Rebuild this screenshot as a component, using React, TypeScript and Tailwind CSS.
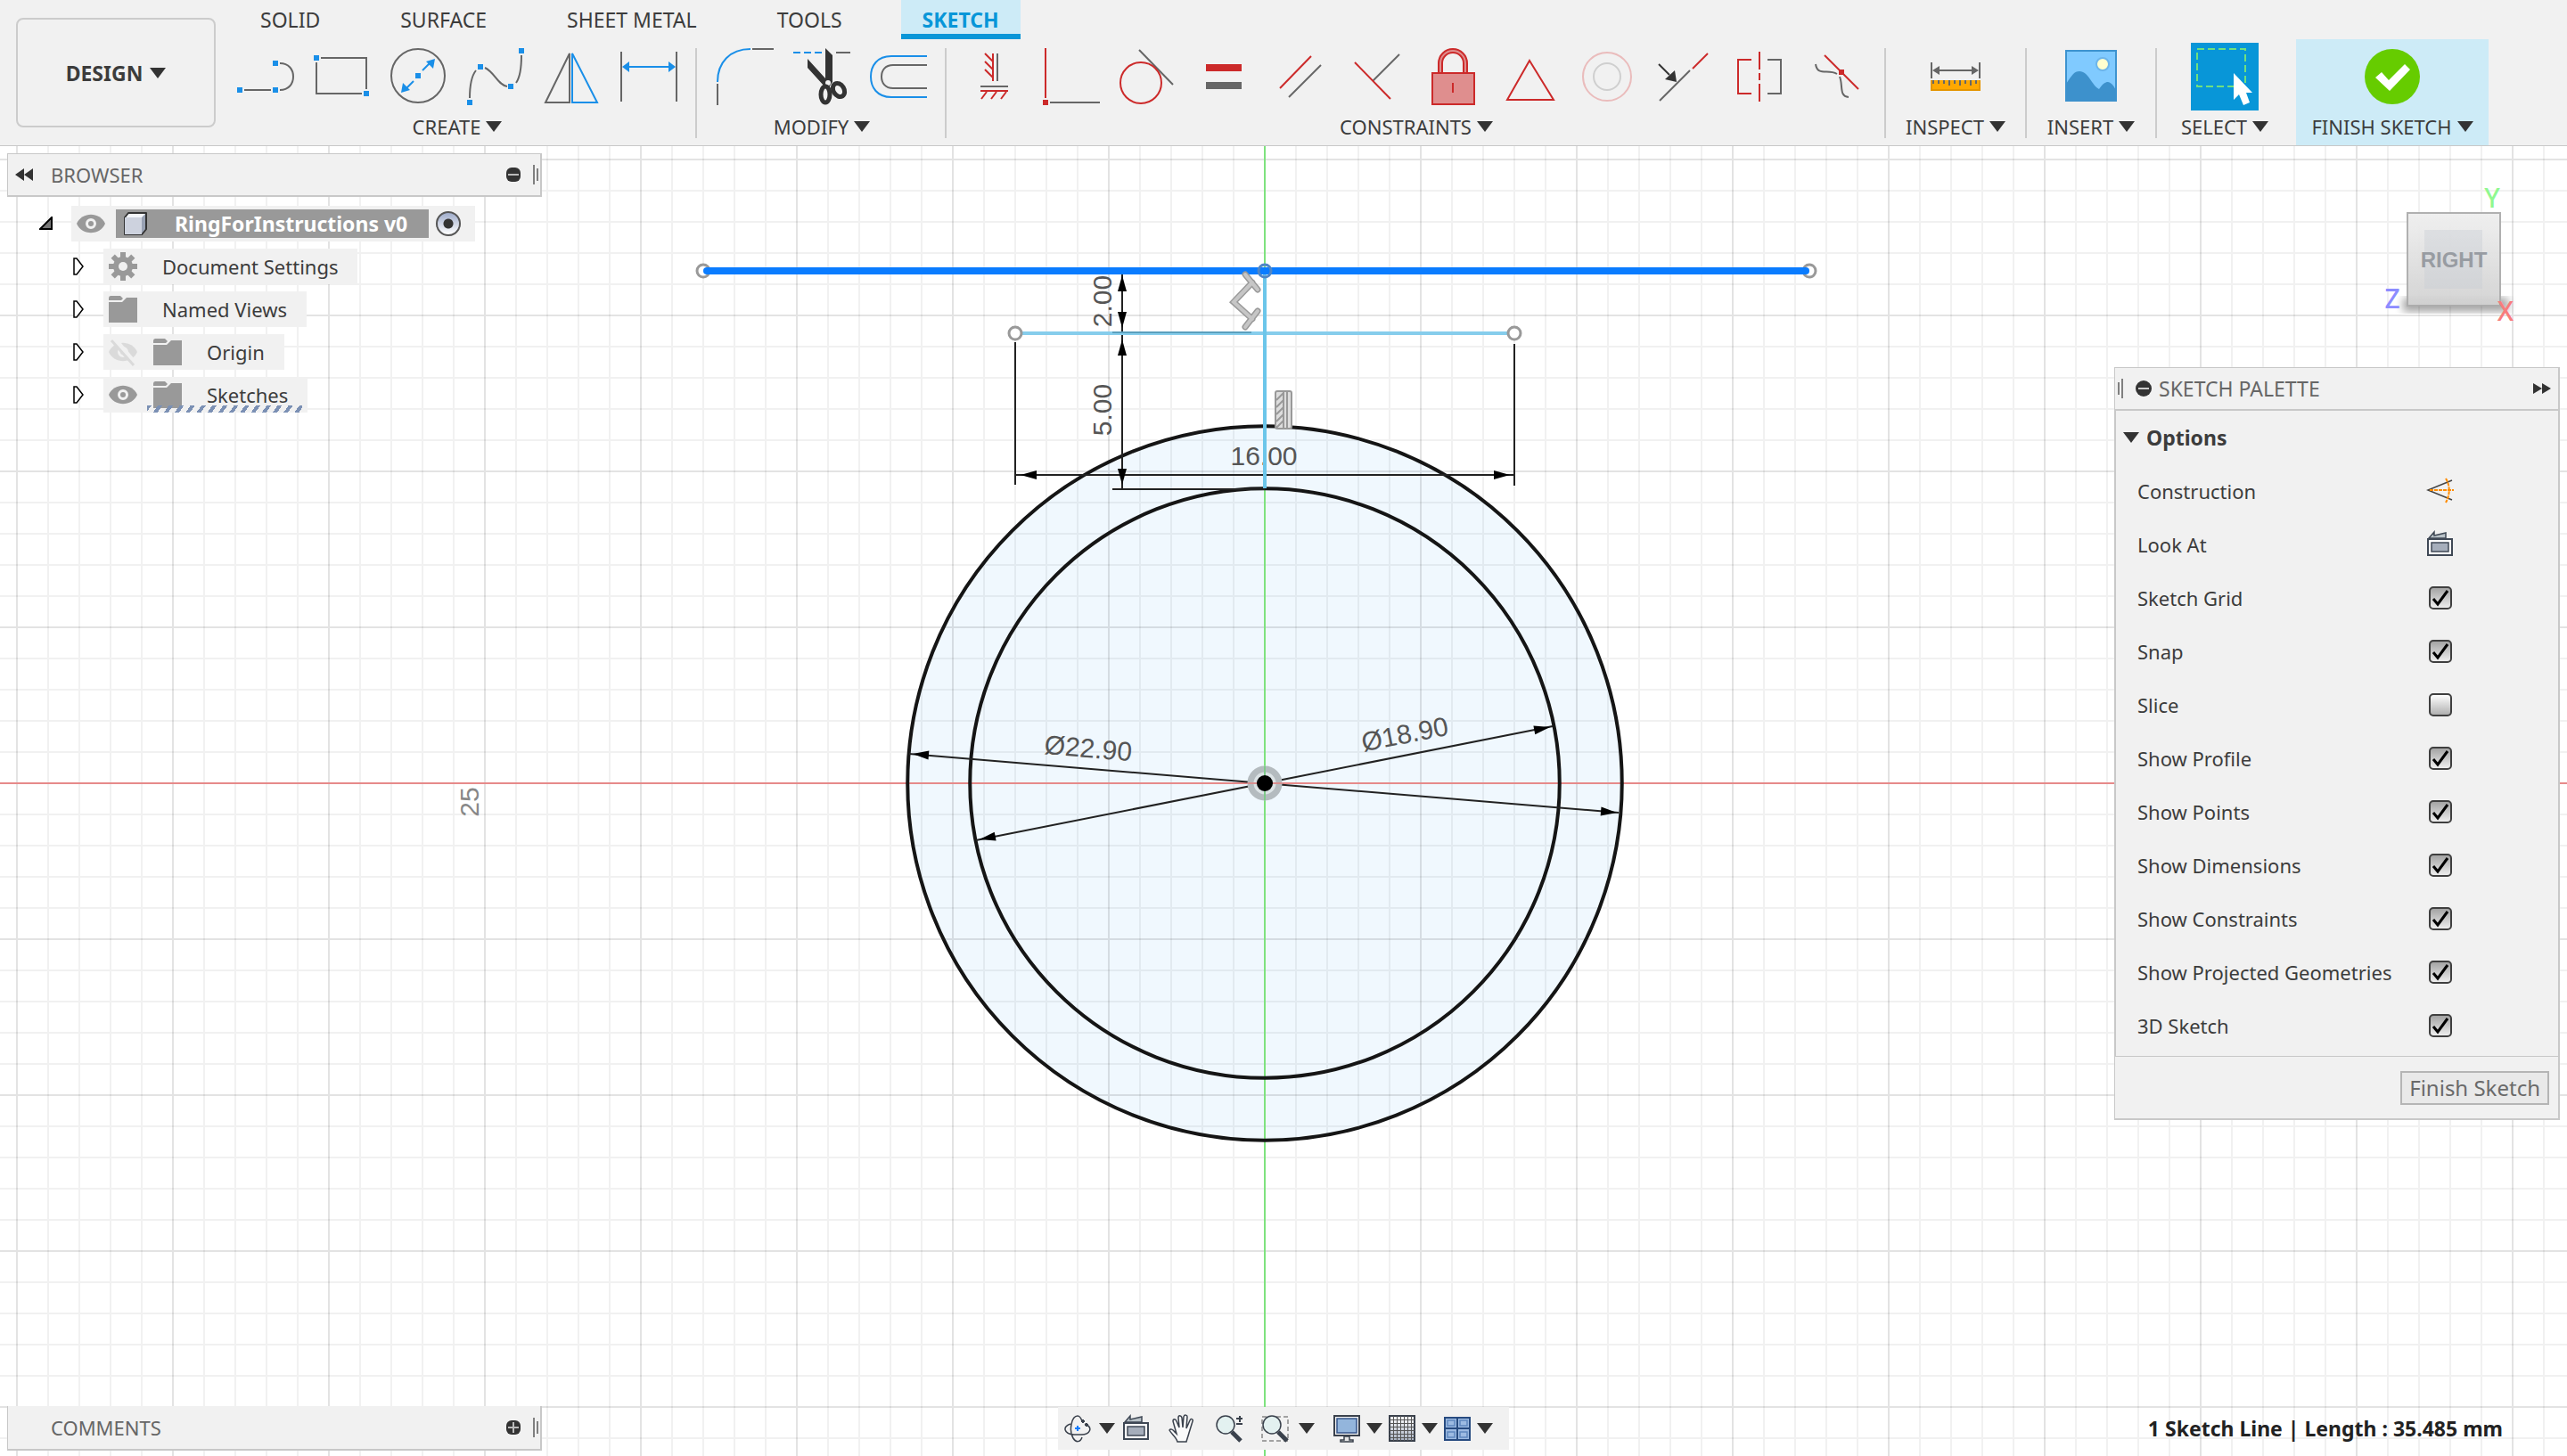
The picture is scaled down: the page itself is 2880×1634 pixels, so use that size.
import type { ReactNode } from 'react';
import clsx from 'clsx';

const GRAY = '#666666';
const BLUE = '#1a8fe8';
const RED = '#cc2a2a';
const DARK = '#333333';

// canvas pixels per millimetre
const MM = 35;

function Caret() {
  return (
    <svg className="h-3 w-[18px] shrink-0" viewBox="0 0 18 12" fill={DARK} aria-hidden="true">
      <path d="M0 0h18L9 12z" />
    </svg>
  );
}

function Dot({ x, y, fill = BLUE }: { x: number; y: number; fill?: string }) {
  return <rect x={x - 3} y={y - 3} width="6" height="6" fill={fill} />;
}

function ToolIcon({ children }: { children: ReactNode }) {
  return (
    <svg className="size-16" viewBox="0 0 64 64" fill="none" stroke={GRAY} strokeWidth="2" aria-hidden="true">
      {children}
    </svg>
  );
}

interface Tool {
  name: string;
  icon: ReactNode;
}

const createTools: Tool[] = [
  {
    name: 'Line',
    icon: (
      <ToolIcon>
        <path d="M8 47h30M48 17c10 0 15 7 15 15s-5 15-15 15" />
        <g stroke="none">
          <Dot x={3} y={47} />
          <Dot x={43} y={47} />
          <Dot x={43} y={17} />
        </g>
      </ToolIcon>
    ),
  },
  {
    name: 'Rectangle',
    icon: (
      <ToolIcon>
        <path d="M8 11h51v35M3 16v35h51" />
        <g stroke="none">
          <Dot x={3} y={11} />
          <Dot x={59} y={51} />
        </g>
      </ToolIcon>
    ),
  },
  {
    name: 'Circle',
    icon: (
      <ToolIcon>
        <circle cx="31" cy="31" r="30" />
        <path d="M36 25l8-8M26 37l-8 8" stroke={BLUE} />
        <g stroke="none" fill={BLUE}>
          <path d="M50 12l-2 11-8-8zM12 50l2-11 8 8z" />
          <Dot x={31} y={31} />
        </g>
      </ToolIcon>
    ),
  },
  {
    name: 'Spline',
    icon: (
      <ToolIcon>
        <path d="M3 56c0-16 3-26 7-31M20 22c11 5 14 19 25 21M55 39c5-7 6-18 6-31" />
        <g stroke="none">
          <Dot x={3} y={61} />
          <Dot x={15} y={21} />
          <Dot x={49} y={43} />
          <Dot x={61} y={3} />
        </g>
      </ToolIcon>
    ),
  },
  {
    name: 'Mirror',
    icon: (
      <ToolIcon>
        <path d="M29 6v55H2z" />
        <path d="M32 6v55h28z" stroke={BLUE} />
      </ToolIcon>
    ),
  },
  {
    name: 'Sketch Dimension',
    icon: (
      <ToolIcon>
        <path d="M1 4v56M63 4v56" />
        <path d="M8 21h48" stroke={BLUE} />
        <path d="M2 21l8-6v12zM62 21l-8-6v12z" fill={BLUE} stroke="none" />
      </ToolIcon>
    ),
  },
];

const modifyTools: Tool[] = [
  {
    name: 'Fillet',
    icon: (
      <ToolIcon>
        <path d="M1 38C1 16 15 1 38 1" stroke={BLUE} />
        <path d="M40 1h24M1 40v24" />
      </ToolIcon>
    ),
  },
  {
    name: 'Trim',
    icon: (
      <ToolIcon>
        <path d="M0 5h32" stroke={BLUE} strokeDasharray="8 4" />
        <path d="M48 5h16" />
        <path d="M36 0l8 8v30l-4 6-5-1-19-21V12l20 22z" fill={DARK} stroke="none" />
        <circle cx="39" cy="39" r="3" fill="#f1f1f1" stroke="none" />
        <g stroke={DARK} strokeWidth="5">
          <ellipse cx="36" cy="52" rx="5" ry="9" />
          <ellipse cx="51" cy="47" rx="6" ry="8" transform="rotate(-32 51 47)" />
        </g>
      </ToolIcon>
    ),
  },
  {
    name: 'Offset',
    icon: (
      <ToolIcon>
        <path d="M64 9H24C8 9 1 20 1 32s7 23 23 23h40" stroke={BLUE} />
        <path d="M64 19H26c-9 0-13 6-13 13s4 13 13 13h38" />
      </ToolIcon>
    ),
  },
];

const constraintTools: Tool[] = [
  {
    name: 'Horizontal/Vertical',
    icon: (
      <ToolIcon>
        <path d="M30 6v31M21 6l9 9M21 15l9 9M21 24l9 9M16 48h31M23 49l-6 8M34 49l-6 8M45 49l-6 8" stroke={RED} />
        <path d="M35 6v31M16 43h31" />
      </ToolIcon>
    ),
  },
  {
    name: 'Coincident',
    icon: (
      <ToolIcon>
        <path d="M3 0v56" stroke={RED} />
        <path d="M8 61h56" />
        <g stroke="none">
          <Dot x={3} y={61} fill={RED} />
        </g>
      </ToolIcon>
    ),
  },
  {
    name: 'Tangent',
    icon: (
      <ToolIcon>
        <path d="M22 2l38 39" />
        <circle cx="24" cy="39" r="23" stroke={RED} />
      </ToolIcon>
    ),
  },
  {
    name: 'Equal',
    icon: (
      <ToolIcon>
        <path d="M11 22h40" stroke={RED} strokeWidth="8" />
        <path d="M11 42h40" strokeWidth="8" />
      </ToolIcon>
    ),
  },
  {
    name: 'Parallel',
    icon: (
      <ToolIcon>
        <path d="M8 45L43 9" stroke={RED} />
        <path d="M18 55l36-36" />
      </ToolIcon>
    ),
  },
  {
    name: 'Perpendicular',
    icon: (
      <ToolIcon>
        <path d="M26 37L56 7" />
        <path d="M6 16l40 41" stroke={RED} />
      </ToolIcon>
    ),
  },
  {
    name: 'Fix/Unfix',
    icon: (
      <ToolIcon>
        <path d="M16 28V17a14 14 0 0 1 28 0v11" stroke={RED} strokeWidth="6" />
        <path d="M16 28V17a14 14 0 0 1 28 0v11" stroke="#df8e8e" />
        <rect x="7" y="28" width="47" height="35" fill="#df8e8e" stroke={RED} />
        <path d="M30 39v11" stroke={RED} />
      </ToolIcon>
    ),
  },
  {
    name: 'Polygon',
    icon: (
      <ToolIcon>
        <path d="M30 14l27 44H5z" stroke={RED} />
      </ToolIcon>
    ),
  },
  {
    name: 'Concentric',
    icon: (
      <ToolIcon>
        <circle cx="31" cy="32" r="27" stroke="#eabcbc" />
        <circle cx="31" cy="32" r="15" stroke="#cfcfcf" />
      </ToolIcon>
    ),
  },
  {
    name: 'Midpoint',
    icon: (
      <ToolIcon>
        <path d="M4 59l34-34" />
        <path d="M41 23L58 6" stroke={RED} />
        <path d="M3 18l12 12" stroke={DARK} />
        <path d="M23 38l-2-13-11 10z" fill={DARK} stroke="none" />
      </ToolIcon>
    ),
  },
  {
    name: 'Symmetry',
    icon: (
      <ToolIcon>
        <path d="M21 13H6v38h15M30 4v20M30 28v8M30 40v20" stroke={RED} />
        <path d="M39 13h15v38H39" />
      </ToolIcon>
    ),
  },
  {
    name: 'Curvature',
    icon: (
      <ToolIcon>
        <path d="M7 18c2 14 14 5 24 11M34 32c4 10-1 22 10 23" />
        <path d="M17 8l38 38" stroke={RED} />
        <g stroke="none">
          <Dot x={36} y={27} fill={RED} />
        </g>
      </ToolIcon>
    ),
  },
];

const inspectTools: Tool[] = [
  {
    name: 'Measure',
    icon: (
      <ToolIcon>
        <path d="M5 16v18M59 16v18M12 25h40" />
        <path d="M6 25l8-5v10zM58 25l-8-5v10z" fill={GRAY} stroke="none" />
        <rect x="4" y="36" width="56" height="12" fill="#e39500" stroke="none" />
        <rect x="6" y="36" width="52" height="10" fill="#ffa800" stroke="none" />
        <path d="M7 36v4M13 36v4M19 36v4M25 36v6M31 36v4M37 36v6M43 36v4M49 36v6M55 36v4" />
      </ToolIcon>
    ),
  },
];

const insertTools: Tool[] = [
  {
    name: 'Insert Image',
    icon: (
      <ToolIcon>
        <rect x="4" y="3" width="56" height="56" fill="#80caff" stroke="#3d93d0" />
        <circle cx="45" cy="18" r="7" fill="#ffffcf" stroke="#6db5ea" />
        <path d="M4 40c7-10 9-14 15-14 10 0 14 16 22 20 4-6 7-8 10-8 5 1 7 6 9 9v13H4z" fill="#3d91cc" stroke="none" />
      </ToolIcon>
    ),
  },
];

const selectTools: Tool[] = [
  {
    name: 'Select',
    icon: (
      <svg className="size-19 shrink-0 bg-[#0896d8]" viewBox="0 0 76 76" fill="none" aria-hidden="true">
        <rect x="7" y="7" width="54" height="42" stroke="#6fe07f" strokeWidth="2" strokeDasharray="8 4" />
        <path d="M48 34l21 22h-7l4 11-7 3-5-12-6 6z" fill="#ffffff" />
      </svg>
    ),
  },
];

const finishTools: Tool[] = [
  {
    name: 'Finish Sketch',
    icon: (
      <ToolIcon>
        <circle cx="32" cy="32" r="31" fill="#66cc00" stroke="none" />
        <path d="M13 33l7-6 8 9 18-18 6 6-23 24z" fill="#ffffff" stroke="none" />
      </ToolIcon>
    ),
  },
];

function ToolGroup({ label, tools, className }: { label: string; tools: Tool[]; className?: string }) {
  return (
    <div className={clsx('flex flex-col items-center gap-3 pt-[10px]', className)}>
      <div className="flex h-16 items-center gap-[22px]">
        {tools.map((tool) => (
          <button key={tool.name} type="button" aria-label={tool.name} className="flex w-16 justify-center">
            {tool.icon}
          </button>
        ))}
      </div>
      <button type="button" className="flex items-center gap-[6px] leading-6 whitespace-nowrap">
        {label}
        <Caret />
      </button>
    </div>
  );
}

function Separator() {
  return <div className="mt-[10px] mb-2 w-[2px] shrink-0 bg-[#cccccc]" />;
}

const tabs = ['SOLID', 'SURFACE', 'SHEET METAL', 'TOOLS', 'SKETCH'];

function Toolbar() {
  return (
    <header className="flex h-41 shrink-0 border-b border-[#c8c8c8] bg-[#f1f1f1]">
      <button
        type="button"
        className="my-5 ml-[18px] flex w-56 shrink-0 items-center justify-center gap-2 rounded-lg border-2 border-[#cccccc] text-[23px] font-bold"
      >
        DESIGN
        <Caret />
      </button>
      <div className="flex flex-col">
        <nav className="ml-[26px] flex h-11 gap-[42px] text-[23px]">
          {tabs.map((tab) => (
            <button
              key={tab}
              type="button"
              className={clsx(
                'h-11 px-6 leading-7',
                tab === 'SKETCH' && 'border-b-6 border-[#0896d8] bg-[#cdebf7] pt-[6px] font-bold text-[#0896d8]',
              )}
            >
              {tab}
            </button>
          ))}
        </nav>
        <div className="flex flex-1">
          <ToolGroup label="CREATE" tools={createTools} className="pr-5 pl-6" />
          <Separator />
          <ToolGroup label="MODIFY" tools={modifyTools} className="pr-5 pl-[22px]" />
          <Separator />
          <ToolGroup label="CONSTRAINTS" tools={constraintTools} className="pr-5 pl-[22px]" />
          <Separator />
          <ToolGroup label="INSPECT" tools={inspectTools} className="w-39" />
          <Separator />
          <ToolGroup label="INSERT" tools={insertTools} className="w-36" />
          <Separator />
          <ToolGroup label="SELECT" tools={selectTools} className="w-39 pr-1" />
          <ToolGroup label="FINISH SKETCH" tools={finishTools} className="w-54 bg-[#cdebf7]" />
        </div>
      </div>
    </header>
  );
}

/* ---------- sketch canvas ---------- */

function gridLines(from: number, to: number) {
  const lines: number[] = [];
  for (let i = from; i <= to; i++) lines.push(i);
  return lines;
}

function Grid() {
  const xs = gridLines(-41, 42);
  const ys = gridLines(-21, 22);
  const path = (major: boolean) =>
    [
      ...xs.filter((i) => (i % 5 === 0) === major).map((i) => `M${i * MM} -715V755`),
      ...ys.filter((i) => (i % 5 === 0) === major).map((i) => `M-1419 ${i * MM}H1461`),
    ].join('');
  return (
    <g strokeWidth="2" fill="none" stroke="#000000">
      <path d={path(false)} opacity="0.055" />
      <path d={path(true)} opacity="0.11" />
    </g>
  );
}

function Arrow({ x, y, angle }: { x: number; y: number; angle: number }) {
  return <path d="M0 0l-18 -5v10z" fill="#000000" stroke="none" transform={`translate(${x} ${y}) rotate(${angle})`} />;
}

function Dim({ x, y, angle = 0, children }: { x: number; y: number; angle?: number; children: string }) {
  return (
    <text textAnchor="middle" transform={`translate(${x} ${y}) rotate(${angle})`}>
      {children}
    </text>
  );
}

function SketchCanvas() {
  return (
    <svg
      className="absolute inset-0 h-full w-full font-['Liberation_Sans',sans-serif] text-[30px]"
      viewBox="-1419 -715 2880 1470"
      preserveAspectRatio="xMidYMid slice"
      role="img"
      aria-label="Sketch"
    >
      <circle r={11.45 * MM} fill="#f0f8fe" />
      <Grid />
      <path d="M-1419 0H1461" stroke="#e68a8a" strokeWidth="2" />
      <path d="M0 -715V755" stroke="#7fe27f" strokeWidth="2" />

      <g fill="none" stroke="#151515" strokeWidth="4">
        <circle r={11.45 * MM} />
        <circle r={9.45 * MM} />
      </g>

      {/* dimension lines */}
      <g stroke="#222222" strokeWidth="2">
        <path d="M-160 -571V-331M-171 -330H0M-280 -346H280M-280 -495V-335M280 -493V-334" fill="none" />
        <path d="M-399 -33L397 33M-324 64L323 -64" fill="none" />
        <Arrow x={-160} y={-570} angle={-90} />
        <Arrow x={-160} y={-511} angle={90} />
        <Arrow x={-160} y={-498} angle={-90} />
        <Arrow x={-160} y={-335} angle={90} />
        <Arrow x={-274} y={-346} angle={180} />
        <Arrow x={275} y={-346} angle={0} />
        <Arrow x={-395} y={-33} angle={185} />
        <Arrow x={395} y={33} angle={5} />
        <Arrow x={-320} y={63} angle={169} />
        <Arrow x={320} y={-63} angle={-11} />
      </g>
      <g fill="#555555">
        <Dim x={-172} y={-541} angle={-90}>2.00</Dim>
        <Dim x={-172} y={-419} angle={-90}>5.00</Dim>
        <Dim x={-1} y={-357}>16.00</Dim>
        <Dim x={-199} y={-29} angle={5}>Ø22.90</Dim>
        <Dim x={159} y={-45} angle={-11}>Ø18.90</Dim>
      </g>
      <g fill="#888888">
        <Dim x={-882} y={21} angle={-90}>25</Dim>
      </g>

      {/* sketch lines and their end points */}
      <path d="M-280 -505H280" stroke="#86cdec" strokeWidth="4" />
      <path d="M0 -575V-331" stroke="#6cc6ea" strokeWidth="4" />
      <path d="M-171 -506H-15" stroke="#5b9fbd" strokeWidth="2" />
      <g fill="#ffffff" stroke="#999999" strokeWidth="3">
        <circle cx="-630" cy="-575" r="7" />
        <circle cx="611" cy="-575" r="7" />
        <circle cx="-280" cy="-505" r="7" />
        <circle cx="280" cy="-505" r="7" />
      </g>
      <path d="M-626 -575H607" stroke="#0a7cff" strokeWidth="8" strokeLinecap="round" />
      <circle cy="-575" r="7" fill="none" stroke="#4f86c6" strokeWidth="3" />

      {/* perpendicular glyph */}
      <g fill="none" strokeLinecap="round">
        <path d="M-14 -562L-35 -540L-14 -521M-22 -571L-8 -554M-8 -530L-22 -512" stroke="#9a9a9a" strokeWidth="7" />
        <path d="M-14 -562L-35 -540L-14 -521M-22 -571L-8 -554M-8 -530L-22 -512" stroke="#c6c6c6" strokeWidth="4" />
      </g>
      {/* vertical glyph */}
      <g fill="none" stroke="#999999" strokeWidth="2">
        <rect x="12" y="-440" width="18" height="42" rx="2" fill="#dddddd" />
        <path d="M21 -440v42M25 -440v42M13 -430l8 -8M13 -422l8 -8M13 -414l8 -8M13 -406l8 -8M13 -399l8 -8" />
      </g>

      <circle r="16" fill="#dce3e6" stroke="#b4bbbf" strokeWidth="7" />
      <path d="M-19 0H19" stroke="#d98f8f" strokeWidth="2" />
      <path d="M0 -19V19" stroke="#7fc98a" strokeWidth="2" />
      <circle r="9" fill="#000000" />
    </svg>
  );
}

/* ---------- browser ---------- */

function Eye({ off }: { off?: boolean }) {
  return (
    <svg className={clsx('size-8 shrink-0', off && 'opacity-25')} viewBox="0 0 32 32" aria-hidden="true">
      <path d="M0 16C6 0 26 0 32 16 26 32 6 32 0 16z" transform="translate(0 2.4) scale(1 .85)" fill="#999999" />
      <circle cx="16" cy="16" r="4.5" fill="none" stroke="#f1f1f1" strokeWidth="3" />
      {off && (
        <>
          <path d="M6 1l24 29" stroke="#f1f1f1" strokeWidth="6" />
          <path d="M3 3l25 28" stroke="#999999" strokeWidth="3" />
        </>
      )}
    </svg>
  );
}

function Folder() {
  return (
    <svg className="size-8 shrink-0" viewBox="0 0 32 32" fill="#999999" aria-hidden="true">
      <path d="M0 3.500q0-2.500 2-2.500h11l3 3-2 2H0z" />
      <path d="M0 8h15l5-5h12v28H0z" />
    </svg>
  );
}

function Gear() {
  return (
    <svg className="size-8 shrink-0" viewBox="-16 -16 32 32" aria-hidden="true">
      <g fill="#999999">
        {[0, 45, 90, 135].map((angle) => (
          <rect key={angle} x="-3" y="-16" width="6" height="32" transform={`rotate(${angle})`} />
        ))}
        <circle r="11" />
      </g>
      <circle r="5" fill="#f1f1f1" />
    </svg>
  );
}

function PanelDot({ plus }: { plus?: boolean }) {
  return (
    <svg className="size-4" viewBox="0 0 16 16" aria-hidden="true">
      <rect width="16" height="16" rx="6" fill={DARK} />
      <path d={plus ? 'M2 8h12M8 2v12' : 'M2 8h12'} stroke="#bbbbbb" strokeWidth="2" />
    </svg>
  );
}

function Handle({ flip }: { flip?: boolean }) {
  return (
    <div className={clsx('flex items-center gap-[2px]', flip && 'flex-row-reverse')}>
      <div className="h-[22px] w-[2px] bg-[#808080]" />
      <div className="h-[14px] w-[2px] bg-[#808080]" />
    </div>
  );
}

interface Node {
  label: string;
  icons: ReactNode;
  projected?: boolean;
}

const nodes: Node[] = [
  { label: 'Document Settings', icons: <Gear /> },
  { label: 'Named Views', icons: <Folder /> },
  { label: 'Origin', icons: <><Eye off /><Folder /></> },
  { label: 'Sketches', icons: <><Eye /><Folder /></>, projected: true },
];

function Browser() {
  return (
    <section className="w-[600px]">
      <div className="flex h-[49px] items-center border-t border-r-2 border-b-2 border-l border-[#c8c8c8] bg-[#f1f1f1] pr-[2px] pl-2 text-[#666666]">
        <button type="button" aria-label="Collapse browser">
          <svg className="h-4 w-5" viewBox="0 0 20 16" fill={DARK} aria-hidden="true">
            <path d="M0 8l10-7v14zM10 8l10-7v14z" />
          </svg>
        </button>
        <h2 className="ml-5 flex-1">BROWSER</h2>
        <button type="button" aria-label="Hide browser" className="mr-[14px]">
          <PanelDot />
        </button>
        <Handle />
      </div>
      <ul className="mt-[10px] flex flex-col gap-2">
        <li className="flex h-10 items-center">
          <button type="button" aria-label="Collapse RingForInstructions v0" className="ml-9 w-9">
            <svg className="size-4" viewBox="0 0 16 16" aria-hidden="true">
              <path d="M14 1v13H1z" fill="#777777" stroke="#000000" strokeWidth="2" />
            </svg>
          </button>
          <div className="flex h-10 items-center bg-[#f1f1f1] pr-4 pl-[6px]">
            <Eye />
            <div className="ml-3 flex h-8 items-center bg-[#999999] pr-6 pl-2 text-[23px] font-bold text-white">
              <svg className="h-[28px] w-[28px]" viewBox="0 0 28 28" stroke={DARK} aria-hidden="true">
                <path d="M2 7l4-5h20v18l-5 6H2z" fill="#f4f6fa" strokeWidth="2" strokeLinejoin="round" />
                <path d="M2 7h19v19H2z" fill="#cdd2de" stroke="none" />
                <path d="M21 7l4-4v17l-4 5z" fill="#98a1b3" stroke="none" />
              </svg>
              <span className="ml-[30px]">RingForInstructions v0</span>
            </div>
            <input
              type="radio"
              name="active-component"
              aria-label="Activate component"
              defaultChecked
              className="ml-2 size-[28px] appearance-none rounded-full border-2 border-[#555555] bg-[radial-gradient(circle,#333333_5px,transparent_6px),linear-gradient(#9faccb,#ffffff)]"
            />
          </div>
        </li>
        {nodes.map((node) => (
          <li key={node.label} className="flex h-10 items-center">
            <button type="button" aria-label={`Expand ${node.label}`} className="ml-18 w-9">
              <svg className="h-6 w-4" viewBox="0 0 16 24" aria-hidden="true">
                <path d="M3 3h3l7 9-7 9H3z" fill="#ffffff" stroke="#000000" strokeWidth="1.500" />
              </svg>
            </button>
            <div className="flex h-10 items-center bg-[#f1f1f1] px-[6px]">
              <div className="relative flex items-center gap-[18px] pr-4">
                {node.icons}
                <span className="ml-[10px]">{node.label}</span>
                {node.projected && (
                  <div className="absolute right-0 -bottom-1 left-[43px] h-2 bg-[repeating-linear-gradient(125deg,#7b90b4_0px,#7b90b4_4px,transparent_4px,transparent_10px)]" />
                )}
              </div>
            </div>
          </li>
        ))}
      </ul>
    </section>
  );
}

/* ---------- view cube ---------- */

function ViewCube() {
  return (
    <svg
      className="mr-8 h-[180px] w-[180px] font-['Liberation_Sans',sans-serif]"
      viewBox="2660 200 180 180"
      role="img"
      aria-label="View cube"
    >
      <defs>
        <linearGradient id="face" x1="0" y1="0" x2="0" y2="1">
          <stop offset="0" stopColor="#efefef" />
          <stop offset="1" stopColor="#d2d2d2" />
        </linearGradient>
        <filter id="soft">
          <feGaussianBlur stdDeviation="5" />
        </filter>
      </defs>
      <rect x="2696" y="334" width="118" height="16" fill="#000000" opacity="0.35" filter="url(#soft)" />
      <rect x="2701" y="239" width="104" height="104" fill="url(#face)" stroke="#acacac" strokeWidth="2" opacity="0.95" />
      <rect x="2720" y="258" width="65" height="66" fill="#c9cdd4" opacity="0.4" />
      <text x="2753" y="300" textAnchor="middle" fontSize="24" fontWeight="700" fill="#989ca2">RIGHT</text>
      <g className="font-['Noto_Sans',sans-serif]" fontSize="30" fontWeight="500" textAnchor="middle">
        <text x="2796" y="233" fill="#90f890">Y</text>
        <text x="2684" y="346" fill="#8c8cff">Z</text>
        <text x="2811" y="360" fill="#f87c7c">X</text>
      </g>
    </svg>
  );
}

/* ---------- palette ---------- */

const options = [
  { label: 'Sketch Grid', checked: true },
  { label: 'Snap', checked: true },
  { label: 'Slice', checked: false },
  { label: 'Show Profile', checked: true },
  { label: 'Show Points', checked: true },
  { label: 'Show Dimensions', checked: true },
  { label: 'Show Constraints', checked: true },
  { label: 'Show Projected Geometries', checked: true },
  { label: '3D Sketch', checked: true },
];

function LookAtIcon() {
  return (
    <svg className="size-8" viewBox="0 0 32 32" stroke="#3f4855" strokeWidth="1.500" aria-hidden="true">
      <path d="M3 9L9 2v4l13-3v6z" fill="#b9c2c8" />
      <rect x="2" y="10" width="27" height="18" fill="#ffffff" strokeWidth="2" />
      <rect x="6" y="14" width="19" height="10" fill="#a6aebb" />
    </svg>
  );
}

function SketchPalette() {
  return (
    <section className="w-[500px]">
      <div className="flex h-[49px] items-center border-t border-r-2 border-b-2 border-l border-[#c8c8c8] bg-[#f1f1f1] pr-2 pl-[3px] text-[23px] text-[#666666]">
        <Handle flip />
        <button type="button" aria-label="Collapse palette" className="ml-[14px]">
          <svg className="size-[18px]" viewBox="0 0 18 18" aria-hidden="true">
            <circle cx="9" cy="9" r="9" fill={DARK} />
            <path d="M3 9h12" stroke="#cccccc" strokeWidth="2" />
          </svg>
        </button>
        <h2 className="ml-2 flex-1">SKETCH PALETTE</h2>
        <button type="button" aria-label="Dock palette">
          <svg className="h-3 w-5" viewBox="0 0 20 12" fill={DARK} aria-hidden="true">
            <path d="M0 0l10 6-10 6zM10 0l10 6-10 6z" />
          </svg>
        </button>
      </div>
      <div className="border-x-2 border-b border-[#c8c8c8] bg-[#f1f1f1] pb-1">
        <h3>
          <button type="button" className="flex h-15 items-center gap-2 pl-2 text-[23px] font-bold">
            <Caret />
            Options
          </button>
        </h3>
        <div className="flex h-15 items-center pl-6">
          <label htmlFor="construction" className="w-[324px]">Construction</label>
          <button id="construction" type="button">
            <svg className="size-8" viewBox="0 0 32 32" fill="none" strokeWidth="1.500" aria-hidden="true">
              <path d="M29 4L2 15l27 11" stroke="#444444" />
              <path d="M4 15h27M22 2c5 8 5 18 0 27" stroke="#ff8c00" strokeWidth="2" strokeDasharray="4 1" />
            </svg>
          </button>
        </div>
        <div className="flex h-15 items-center pl-6">
          <label htmlFor="look-at" className="w-[324px]">Look At</label>
          <button id="look-at" type="button">
            <LookAtIcon />
          </button>
        </div>
        {options.map((option) => (
          <label key={option.label} className="flex h-15 items-center pl-6">
            <span className="w-[327px]">{option.label}</span>
            <span className="grid size-[26px]">
              <input
                type="checkbox"
                defaultChecked={option.checked}
                className="peer col-start-1 row-start-1 size-[26px] appearance-none rounded-[5px] border-2 border-[#3f3f3f] bg-linear-to-b from-white to-[#b0b0b0] checked:from-[#a4a4a4] checked:to-[#eeeeee]"
              />
              <svg
                className="pointer-events-none invisible col-start-1 row-start-1 size-[26px] peer-checked:visible"
                viewBox="0 0 26 26"
                fill="none"
                stroke="#000000"
                strokeWidth="3"
                aria-hidden="true"
              >
                <path d="M5 14l5 6L21 5" />
              </svg>
            </span>
          </label>
        ))}
      </div>
      <div className="flex h-[71px] items-center justify-end border-r-2 border-b-2 border-l border-[#c8c8c8] bg-[#f1f1f1] pr-[10px]">
        <button type="button" className="flex h-[38px] items-center border-2 border-[#b5b5b5] bg-[#e9e9e9] px-2 text-[24px] text-[#6a6a6a]">
          Finish Sketch
        </button>
      </div>
    </section>
  );
}

/* ---------- bottom bar ---------- */

function NavIcon({ label, children }: { label: string; children: ReactNode }) {
  return (
    <button type="button" aria-label={label}>
      <svg className="size-8" viewBox="0 0 32 32" fill="none" stroke="#3a414c" strokeWidth="1.500" aria-hidden="true">
        {children}
      </svg>
    </button>
  );
}

function NavMenu({ label }: { label: string }) {
  return (
    <button type="button" aria-label={label}>
      <Caret />
    </button>
  );
}

function NavigationBar() {
  return (
    <div className="flex h-12 items-center gap-5 bg-[#f1f1f1] pr-[18px] pl-[6px]">
      <div className="flex items-center gap-2">
        <NavIcon label="Orbit">
          <path d="M8 11c-9 3-8 11 4 12M24 11c10 4 6 12-4 12h-8M11 27c-5-8-2-25 5-25 3 0 4 3 5 6M21 26c-2 6-7 6-10 1" />
          <path d="M20 8h4M22 6v4M24 12h4M26 10v4" strokeWidth="2" />
          <path d="M13 16h6M16 13v6" stroke="#0a7cff" strokeWidth="2" />
        </NavIcon>
        <NavMenu label="Orbit options" />
        <button type="button" aria-label="Look at">
          <LookAtIcon />
        </button>
      </div>
      <NavIcon label="Pan">
        <path
          d="M10 31c-1-5-7-9-9-13 1-2 4-1 6 2l2 2L5 8c0-3 3-3 4 0l3 7-1-11c0-3 3-3 4 0l1 11 1-12c1-3 4-2 4 0l-1 13 4-9c1-3 4-1 3 1l-4 13c-1 4-2 6-3 10z"
          fill="#fafafa"
        />
      </NavIcon>
      <NavIcon label="Zoom">
        <path d="M19 20l10 10" strokeWidth="5" />
        <circle cx="12" cy="12" r="10" fill="#e3f1f0" />
        <path d="M24 5h7M28 2v7M24 11h7" strokeWidth="2" />
      </NavIcon>
      <div className="flex items-center gap-[10px]">
        <NavIcon label="Zoom window">
          <rect x="1" y="3" width="29" height="27" stroke="#888888" strokeDasharray="5 3" />
          <path d="M19 20l10 10" strokeWidth="5" />
          <circle cx="12" cy="12" r="10" fill="#e3f1f0" />
        </NavIcon>
        <NavMenu label="Zoom options" />
      </div>
      <div className="flex items-center gap-[6px]">
        <NavIcon label="Display settings">
          <rect x="2" y="2" width="28" height="22" fill="#f4f4f4" strokeWidth="2" />
          <rect x="5" y="5" width="22" height="16" fill="#93b5dc" stroke="#36558a" />
          <path d="M13 25v4H9v2h14v-2h-4v-4z" fill="#e5e5e5" />
        </NavIcon>
        <NavMenu label="Display options" />
        <NavIcon label="Grid and snaps">
          <defs>
            <linearGradient id="mesh" x1="0" y1="0" x2="0" y2="1">
              <stop offset="0" stopColor="#ffffff" />
              <stop offset="1" stopColor="#a9b2c2" />
            </linearGradient>
          </defs>
          <rect x="2" y="2" width="28" height="28" fill="url(#mesh)" strokeWidth="2" />
          <path
            d="M6.500 2v28M10.500 2v28M14.500 2v28M18.500 2v28M22.500 2v28M26.500 2v28M2 6.500h28M2 10.500h28M2 14.500h28M2 18.500h28M2 22.500h28M2 26.500h28"
            stroke="#555555"
            strokeWidth="1"
          />
        </NavIcon>
        <NavMenu label="Grid options" />
        <NavIcon label="Viewports">
          <rect x="2" y="4" width="28" height="25" fill="#9dbbe2" stroke="#274b80" strokeWidth="2" />
          <path d="M16 4v25M2 16h28" stroke="#274b80" strokeWidth="2" />
          <path d="M5 7h8v6H5zM19 7h8v6h-8zM5 20h8v6H5zM19 20h8v6h-8z" stroke="#5f88bf" />
        </NavIcon>
        <NavMenu label="Viewport options" />
      </div>
    </div>
  );
}

function BottomBar() {
  return (
    <footer className="grid grid-cols-[1fr_auto_1fr] items-center pb-[6px]">
      <div className="ml-2 flex h-[50px] w-[600px] items-center border-r-2 border-b-2 border-l border-[#c8c8c8] bg-[#f1f1f1] pr-[2px] pl-12 text-[#666666]">
        <h2 className="flex-1">COMMENTS</h2>
        <button type="button" aria-label="Show comments" className="mr-[14px]">
          <PanelDot plus />
        </button>
        <Handle />
      </div>
      <NavigationBar />
      <p className="mr-18 text-right text-[23px] font-bold text-[#222222]">1 Sketch Line | Length : 35.485 mm</p>
    </footer>
  );
}

export default function App() {
  return (
    <div className="flex min-h-screen flex-col bg-white font-['Noto_Sans','Open_Sans',sans-serif] text-[22px] leading-7 text-[#3c3c3c]">
      <Toolbar />
      <main className="relative flex flex-1 flex-col">
        <SketchCanvas />
        <div className="relative flex flex-1 flex-col justify-between">
          <div className="flex items-start justify-between pt-2 pr-2 pl-2">
            <Browser />
            <div className="flex flex-col items-end gap-8 pt-7">
              <ViewCube />
              <SketchPalette />
            </div>
          </div>
          <BottomBar />
        </div>
      </main>
    </div>
  );
}
